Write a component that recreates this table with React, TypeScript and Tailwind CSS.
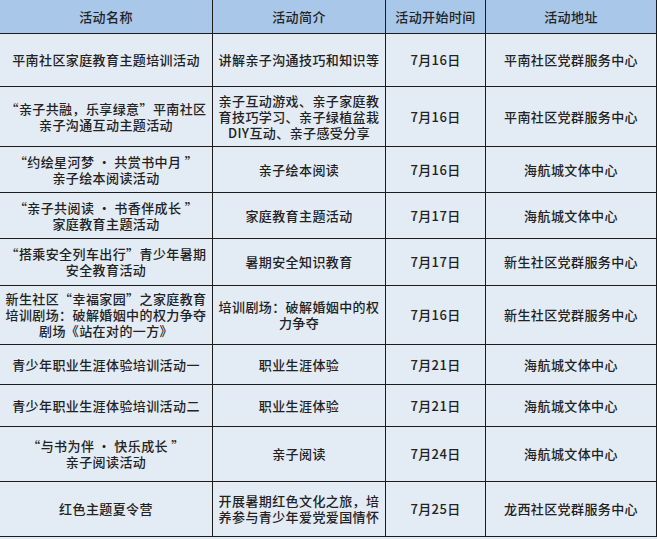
import React from "react"

type Row = { name: React.ReactNode; intro: React.ReactNode; date: string; place: string }

const rows: Row[] = [
  { name: "平南社区家庭教育主题培训活动", intro: "讲解亲子沟通技巧和知识等", date: "7月16日", place: "平南社区党群服务中心" },
  {
    name: (<>“亲子共融，乐享绿意”平南社区<br />亲子沟通互动主题活动</>),
    intro: (<>亲子互动游戏、亲子家庭教<br />育技巧学习、亲子绿植盆栽<br />DIY互动、亲子感受分享</>),
    date: "7月16日",
    place: "平南社区党群服务中心",
  },
  { name: (<>“约绘星河梦 · 共赏书中月 ”<br />亲子绘本阅读活动</>), intro: "亲子绘本阅读", date: "7月16日", place: "海航城文体中心" },
  { name: (<>“亲子共阅读 · 书香伴成长 ”<br />家庭教育主题活动</>), intro: "家庭教育主题活动", date: "7月17日", place: "海航城文体中心" },
  { name: (<>“搭乘安全列车出行”青少年暑期<br />安全教育活动</>), intro: "暑期安全知识教育", date: "7月17日", place: "新生社区党群服务中心" },
  {
    name: (<>新生社区“幸福家园”之家庭教育<br />培训剧场：破解婚姻中的权力争夺<br />剧场《站在对的一方》</>),
    intro: (<>培训剧场：破解婚姻中的权<br />力争夺</>),
    date: "7月16日",
    place: "新生社区党群服务中心",
  },
  { name: "青少年职业生涯体验培训活动一", intro: "职业生涯体验", date: "7月21日", place: "海航城文体中心" },
  { name: "青少年职业生涯体验培训活动二", intro: "职业生涯体验", date: "7月21日", place: "海航城文体中心" },
  { name: (<>“与书为伴 · 快乐成长 ”<br />亲子阅读活动</>), intro: "亲子阅读", date: "7月24日", place: "海航城文体中心" },
  { name: "红色主题夏令营", intro: (<>开展暑期红色文化之旅，培<br />养参与青少年爱党爱国情怀</>), date: "7月25日", place: "龙西社区党群服务中心" },
]

function Cell({ children, head }: { children: React.ReactNode; head?: boolean }) {
  return (
    <div
      className={
        "flex items-center justify-center border-r border-b border-[#1c1c1c] px-1 text-center " +
        (head ? "bg-[#a9c7e8]" : "bg-[#e3ebf5]")
      }
    >
      <span className="block">{children}</span>
    </div>
  )
}

export default function App() {
  return (
    <div className="w-[657px] h-[539px] bg-[#e3ebf5] font-['Noto_Sans_CJK_SC',sans-serif] font-medium text-[13px] leading-[16px] tracking-[0.4px] text-[#222]">
      <div className="grid grid-cols-[213px_173px_100px_171px] grid-rows-[34px_53px_60px_46px_46px_47px_59px_40px_42px_55px_55px]">
        <Cell head>活动名称</Cell>
        <Cell head>活动简介</Cell>
        <Cell head>活动开始时间</Cell>
        <Cell head>活动地址</Cell>
        {rows.map((r, i) => (
          <React.Fragment key={i}>
            <Cell>{r.name}</Cell>
            <Cell>{r.intro}</Cell>
            <Cell>{r.date}</Cell>
            <Cell>{r.place}</Cell>
          </React.Fragment>
        ))}
      </div>
    </div>
  )
}
